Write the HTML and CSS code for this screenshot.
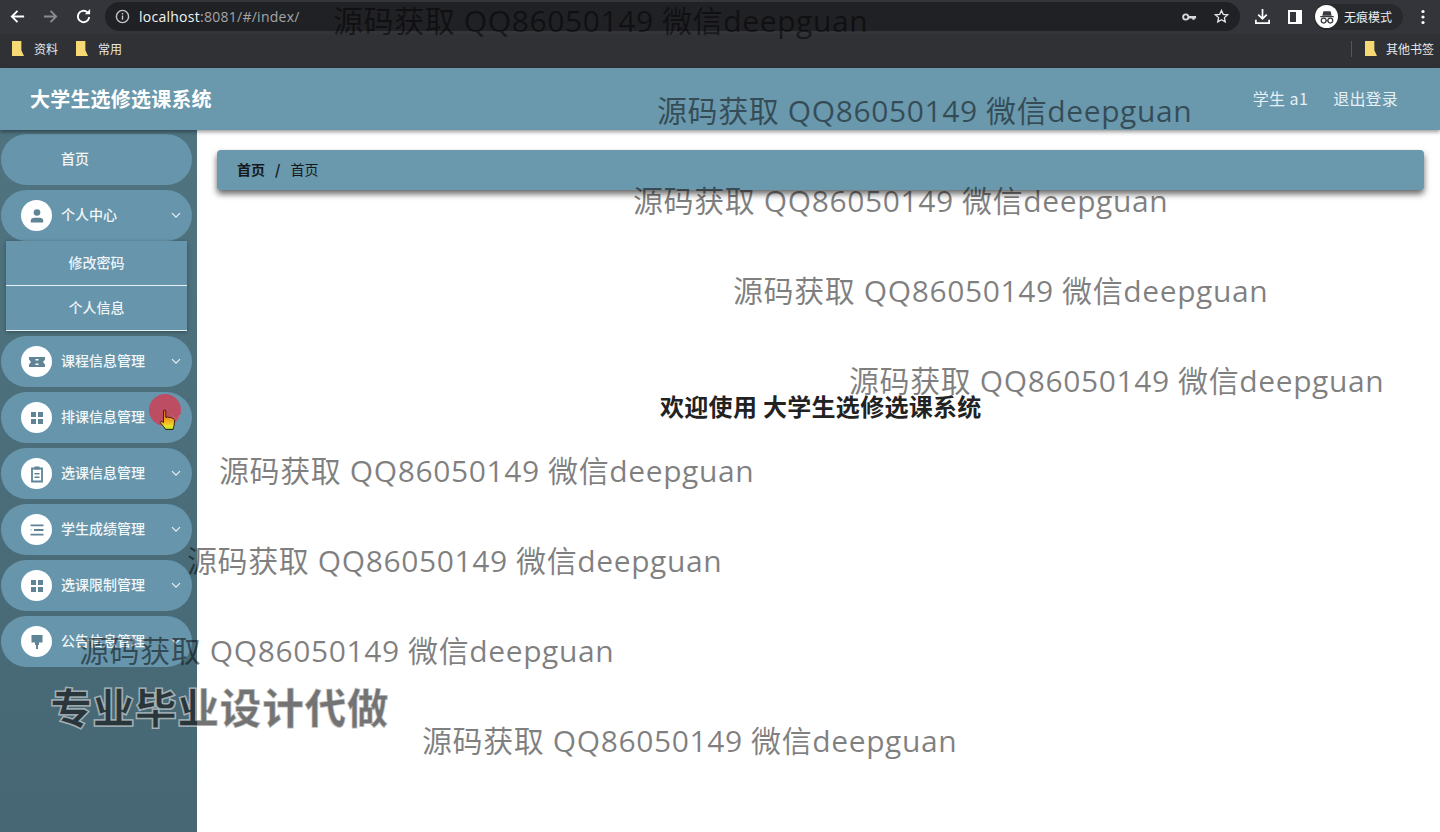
FILE: index.html
```html
<!DOCTYPE html>
<html>
<head>
<meta charset="utf-8">
<title>大学生选修选课系统</title>
<link rel="stylesheet" href="styles.css">
</head>
<body>
<div class="browser">
    <div class="toolbar">
        <svg class="tool-icon" viewBox="0 0 18 18"><path d="M16 9H3M9 3L3 9l6 6" fill="none" stroke="#fff" stroke-width="2"/></svg>
        <svg class="tool-icon forward" viewBox="0 0 18 18"><path d="M2 9h13M9 3l6 6-6 6" fill="none" stroke="#8a8b8e" stroke-width="2"/></svg>
        <svg class="tool-icon reload" viewBox="0 0 18 18"><path d="M15 9.500A6 6 0 1 1 13 4.500" fill="none" stroke="#fff" stroke-width="2"/><path d="M10.500 6.500H16V1z" fill="#fff"/></svg>
        <div class="omnibox">
            <svg class="info-icon" viewBox="0 0 16 16"><circle cx="8" cy="8" r="6.500" fill="none" stroke="#c4c6c9" stroke-width="1.500"/><path d="M8 7v4.500M8 4.300v1.500" stroke="#c4c6c9" stroke-width="1.500"/></svg>
            <span class="url-host">localhost</span><span class="url-rest">:8081/#/index/</span>
            <span class="omnibox-space"></span>
            <svg class="key-icon" viewBox="0 0 16 10"><circle cx="4" cy="5" r="2.800" fill="none" stroke="#d8d9db" stroke-width="2"/><path d="M7 4h8v2.500h-1.500v1.500H11V6.500H7z" fill="#d8d9db"/></svg>
            <svg class="star-icon" viewBox="0 0 16 16"><path d="M8 1.500l1.900 4.200 4.600.5-3.400 3 .9 4.500L8 11.400l-4 2.300.9-4.500-3.400-3 4.600-.5z" fill="none" stroke="#e3e4e6" stroke-width="1.400"/></svg>
        </div>
        <svg class="download-icon" viewBox="0 0 18 18"><path d="M9 1v10M4.500 7L9 11.500 13.500 7M2 12.500V16h14v-3.500" fill="none" stroke="#fff" stroke-width="1.800"/></svg>
        <svg class="panel-icon" viewBox="0 0 14 14"><rect x="1" y="1" width="12" height="12" fill="none" stroke="#fff" stroke-width="2"/><rect x="8" y="1" width="5" height="12" fill="#fff"/></svg>
        <div class="incognito">
            <span class="incognito-face">
                <svg viewBox="0 0 20 20"><path d="M2.500 9h15v1.200h-15zM6 3.500h8l1.200 5H4.800z" fill="#3a3b3f"/><circle cx="6.300" cy="14" r="2.700" fill="none" stroke="#3a3b3f" stroke-width="1.400"/><circle cx="13.700" cy="14" r="2.700" fill="none" stroke="#3a3b3f" stroke-width="1.400"/><path d="M9 14h2" stroke="#3a3b3f" stroke-width="1.200"/></svg>
            </span>
            <span>无痕模式</span>
        </div>
        <svg class="dots-icon" viewBox="0 0 4 16"><circle cx="2" cy="2.500" r="1.600" fill="#fff"/><circle cx="2" cy="8" r="1.600" fill="#fff"/><circle cx="2" cy="13.500" r="1.600" fill="#fff"/></svg>
    </div>
    <div class="bookmarks">
        <span class="bookmark"><i class="folder"></i>资料</span>
        <span class="bookmark"><i class="folder"></i>常用</span>
        <span class="bookmarks-space"></span>
        <span class="bookmark-sep"></span>
        <span class="bookmark last"><i class="folder"></i>其他书签</span>
    </div>
</div>

<div class="header">
    <div class="site-title">大学生选修选课系统</div>
    <div class="user-name">学生 a1</div>
    <div class="logout">退出登录</div>
</div>

<div class="main">
    <div class="sidebar">
        <div class="menu-item plain"><span class="menu-text">首页</span></div>
        <div class="menu-item">
            <span class="menu-icon"><svg viewBox="0 0 20 20"><circle cx="10" cy="6.500" r="3.300"/><path d="M3.800 16.500v-2c0-1.800 1.700-2.800 3.500-2.800h5.400c1.800 0 3.500 1 3.500 2.800v2z"/></svg></span>
            <span class="menu-text">个人中心</span>
            <svg class="chevron" viewBox="0 0 10 7"><path d="M1 1.200l4 4 4-4" fill="none" stroke="#e8f2f6" stroke-width="1.200"/></svg>
        </div>
        <div class="submenu">
            <div class="submenu-item">修改密码</div>
            <div class="submenu-item">个人信息</div>
        </div>
        <div class="menu-item">
            <span class="menu-icon"><svg viewBox="0 0 20 20"><path d="M2 5h16v2.500l-2 2.500 2 2.500V15H2v-2.500L4 10 2 7.500zM8.500 7v1.500h3V7zM8.500 11.500V13h3v-1.500z" fill-rule="evenodd"/></svg></span>
            <span class="menu-text">课程信息管理</span>
            <svg class="chevron" viewBox="0 0 10 7"><path d="M1 1.200l4 4 4-4" fill="none" stroke="#e8f2f6" stroke-width="1.200"/></svg>
        </div>
        <div class="menu-item">
            <span class="menu-icon"><svg viewBox="0 0 20 20"><path d="M4 4h5v5H4zM11 4h5v5h-5zM4 11h5v5H4zM11 11h5v5h-5z"/></svg></span>
            <span class="menu-text">排课信息管理</span>
            <svg class="chevron" viewBox="0 0 10 7"><path d="M1 1.200l4 4 4-4" fill="none" stroke="#e8f2f6" stroke-width="1.200"/></svg>
        </div>
        <div class="menu-item">
            <span class="menu-icon"><svg viewBox="0 0 20 20"><path d="M5 4.500h10v13H5z" fill="none" stroke="#5e8496" stroke-width="1.800"/><path d="M7.500 2.500h5v3h-5zM7.500 9h5v1.500h-5zM7.500 12.500h5V14h-5z"/></svg></span>
            <span class="menu-text">选课信息管理</span>
            <svg class="chevron" viewBox="0 0 10 7"><path d="M1 1.200l4 4 4-4" fill="none" stroke="#e8f2f6" stroke-width="1.200"/></svg>
        </div>
        <div class="menu-item">
            <span class="menu-icon"><svg viewBox="0 0 20 20"><path d="M3.500 4.500h13v1.800h-13zM7 9.100h9.500v1.800H7zM3.500 9.500l2 .5-2 .5zM3.500 13.700h13v1.800h-13z"/></svg></span>
            <span class="menu-text">学生成绩管理</span>
            <svg class="chevron" viewBox="0 0 10 7"><path d="M1 1.200l4 4 4-4" fill="none" stroke="#e8f2f6" stroke-width="1.200"/></svg>
        </div>
        <div class="menu-item">
            <span class="menu-icon"><svg viewBox="0 0 20 20"><path d="M4 4h5v5H4zM11 4h5v5h-5zM4 11h5v5H4zM11 11h5v5h-5z"/></svg></span>
            <span class="menu-text">选课限制管理</span>
            <svg class="chevron" viewBox="0 0 10 7"><path d="M1 1.200l4 4 4-4" fill="none" stroke="#e8f2f6" stroke-width="1.200"/></svg>
        </div>
        <div class="menu-item">
            <span class="menu-icon"><svg viewBox="0 0 20 20"><path d="M4.500 3h11v7.500h-3.500V13h-1v4H9v-4H8v-2.500H4.500z"/></svg></span>
            <span class="menu-text">公告信息管理</span>
            <svg class="chevron" viewBox="0 0 10 7"><path d="M1 1.200l4 4 4-4" fill="none" stroke="#e8f2f6" stroke-width="1.200"/></svg>
        </div>
    </div>
    <div class="content">
        <div class="breadcrumb"><b>首页</b><b class="crumb-sep">/</b><span>首页</span></div>
        <div class="welcome">欢迎使用 大学生选修选课系统</div>
    </div>
</div>

<!-- overlays burned into the recording -->
<div class="click-dot"></div>
<svg class="hand-cursor" viewBox="0 0 17 23">
    <defs><linearGradient id="hand" x1="0" y1="0" x2="0" y2="1"><stop offset="0" stop-color="#d9641f"/><stop offset=".6" stop-color="#f3b21f"/><stop offset=".85" stop-color="#e9e52a"/><stop offset="1" stop-color="#7fd02a"/></linearGradient></defs>
    <path d="M4.500 2c0-1.400 2.300-1.400 2.300 0v6.500l1.500-.5 1.500.5 1.500-.2 1.500.7 1.500.5c1 .5 1.200 1.500 1.200 2.500 0 3-.5 5-1.500 8.500H6.500c-1-2-2.800-4-5-6.500-.7-1 .5-2.200 1.500-1.500l1.500 1.200z" fill="url(#hand)" stroke="#3d2412" stroke-width="1"/>
</svg>
<div class="mark m1">源码获取 QQ86050149 微信deepguan</div>
<div class="mark m2">源码获取 QQ86050149 微信deepguan</div>
<div class="mark m3">源码获取 QQ86050149 微信deepguan</div>
<div class="mark m4">源码获取 QQ86050149 微信deepguan</div>
<div class="mark m5">源码获取 QQ86050149 微信deepguan</div>
<div class="mark m6">源码获取 QQ86050149 微信deepguan</div>
<div class="mark m7">源码获取 QQ86050149 微信deepguan</div>
<div class="mark m8">源码获取 QQ86050149 微信deepguan</div>
<div class="mark m9">源码获取 QQ86050149 微信deepguan</div>
<div class="promo">专业毕业设计代做</div>
</body>
</html>
```
FILE: styles.css
```css
html, body {
    height: 100%;
    margin: 0;
    padding: 0;
}

body {
    position: relative;
    display: flex;
    flex-direction: column;
    height: 832px;
    overflow: hidden;
    font-family: "Noto Sans CJK SC", "Open Sans", sans-serif;
    font-size: 14px;
    background: #fff;
}

/* browser chrome */
.browser {
    height: 68px;
    flex: none;
    background: #34353a;
    color: #e8e9eb;
}

.toolbar {
    display: flex;
    align-items: center;
    height: 34px;
    padding: 0 0 1px 9px;
    box-sizing: border-box;
}

.tool-icon {
    width: 17px;
    height: 17px;
    flex: none;
    margin-right: 16px;
}

.reload {
    margin-right: 13px;
}

.omnibox {
    display: flex;
    align-items: center;
    width: 1135px;
    height: 29px;
    flex: none;
    padding: 0 10px;
    box-sizing: border-box;
    background: #202124;
    border-radius: 15px;
    font-family: "Open Sans", sans-serif;
    font-size: 14px;
    letter-spacing: .26px;
}

.info-icon {
    width: 15px;
    height: 15px;
    margin-right: 9px;
}

.url-host {
    color: #f1f2f3;
}

.url-rest {
    color: #a3a5a8;
}

.omnibox-space,
.bookmarks-space {
    flex: 1;
}

.key-icon {
    width: 15px;
    height: 10px;
    margin-right: 17px;
}

.star-icon {
    width: 15px;
    height: 15px;
    margin-right: 1px;
}

.download-icon {
    width: 17px;
    height: 17px;
    flex: none;
    margin-left: 14px;
}

.panel-icon {
    width: 14px;
    height: 14px;
    flex: none;
    margin-left: 17px;
}

.incognito {
    display: flex;
    align-items: center;
    width: 89px;
    height: 26px;
    flex: none;
    box-sizing: border-box;
    margin-left: 12px;
    background: #28292c;
    border-radius: 13px;
    font-size: 12px;
    color: #eceded;
}

.incognito-face {
    display: flex;
    align-items: center;
    justify-content: center;
    width: 23px;
    height: 23px;
    margin: 0 6px 0 1px;
    background: #fff;
    border-radius: 50%;
}

.incognito-face svg {
    width: 18px;
    height: 18px;
}

.dots-icon {
    width: 4px;
    height: 16px;
    flex: none;
    margin-left: 18px;
}

.bookmarks {
    display: flex;
    align-items: center;
    height: 34px;
    padding: 0 6px 5px 12px;
    box-sizing: border-box;
    font-size: 12px;
    background: #303135;
}

.bookmark {
    display: flex;
    align-items: center;
    margin-right: 18px;
}

.bookmark.last {
    margin-right: 0;
}

.folder {
    display: block;
    width: 12px;
    height: 15px;
    margin-right: 10px;
    background: #f6d874;
    clip-path: polygon(0 0, 78% 0, 78% 62%, 100% 100%, 0 100%);
}

.last .folder {
    margin-right: 9px;
}

.bookmark-sep {
    width: 1px;
    height: 16px;
    margin-right: 13px;
    background: #55565a;
}

/* app header */
.header {
    display: flex;
    align-items: center;
    height: 62px;
    flex: none;
    padding: 0 42px 2px 30px;
    box-sizing: border-box;
    background: #6a98ad;
    color: #e6f0f4;
    box-shadow: 0 2px 4px rgba(0, 0, 0, .4);
    position: relative;
    z-index: 2;
}

.site-title {
    flex: 1;
    font-size: 20px;
    font-weight: bold;
    letter-spacing: .2px;
    color: #fff;
}

.user-name {
    font-size: 16px;
    letter-spacing: .4px;
    margin-right: 25px;
}

.logout {
    font-size: 16px;
    letter-spacing: .2px;
}

.main {
    display: flex;
    flex: 1;
    min-height: 0;
}

/* left menu */
.sidebar {
    display: flex;
    flex-direction: column;
    gap: 5px;
    width: 197px;
    flex: none;
    padding: 4px 5px 0 1px;
    box-sizing: border-box;
    background: linear-gradient(180deg, #4f7480, #466773);
}

.menu-item {
    display: flex;
    align-items: center;
    height: 51px;
    flex: none;
    padding-left: 20px;
    box-sizing: border-box;
    background: #6795ab;
    border-radius: 26px;
    color: #f2f7f9;
}

.menu-item.plain {
    padding-left: 60px;
}

.menu-icon {
    display: flex;
    align-items: center;
    justify-content: center;
    width: 31px;
    height: 31px;
    flex: none;
    margin-right: 9px;
    background: #fff;
    border-radius: 50%;
}

.menu-icon svg {
    width: 20px;
    height: 20px;
    fill: #5e8496;
}

.menu-text {
    flex: 1;
    padding-bottom: 3px;
    font-weight: 500;
}

.chevron {
    width: 10px;
    height: 7px;
    flex: none;
    margin-right: 11px;
}

.submenu {
    margin: -5px 5px 0 5px;
    background: #6795ab;
    color: #edf3f6;
    box-shadow: 0 1px 4px rgba(0, 0, 0, .3);
    font-weight: 500;
}

.submenu-item {
    height: 45px;
    line-height: 42px;
    box-sizing: border-box;
    border-bottom: 1px solid #e6f0f5;
    text-align: center;
}

/* content */
.content {
    display: flex;
    flex-direction: column;
    flex: 1;
    padding: 20px 16px 0 20px;
}

.breadcrumb {
    display: flex;
    align-items: center;
    height: 40px;
    padding: 0 0 2px 20px;
    box-sizing: border-box;
    background: #6a98ad;
    border-radius: 4px;
    color: #14181c;
    box-shadow: 0 4px 6px rgba(0, 0, 0, .6);
}

.crumb-sep {
    margin: 0 10px;
}

.welcome {
    margin-top: 198px;
    padding-left: 443px;
    font-size: 24px;
    font-weight: bold;
    letter-spacing: .3px;
    color: #222;
}

/* video overlays */
.click-dot {
    position: absolute;
    left: 149px;
    top: 394px;
    width: 32px;
    height: 32px;
    background: rgba(205, 65, 85, .85);
    border-radius: 50%;
    z-index: 5;
}

.hand-cursor {
    position: absolute;
    left: 159px;
    top: 409px;
    width: 17px;
    height: 23px;
    z-index: 6;
}

.mark {
    position: absolute;
    z-index: 7;
    font-family: "Open Sans", "Noto Sans CJK SC", sans-serif;
    font-size: 30px;
    line-height: 40px;
    letter-spacing: .6px;
    white-space: nowrap;
    color: rgba(0, 0, 0, .5);
}

.m1 { left: 333px; top: 1px; }
.m2 { left: 657px; top: 91px; }
.m3 { left: 633px; top: 181px; }
.m4 { left: 733px; top: 271px; }
.m5 { left: 849px; top: 361px; }
.m6 { left: 219px; top: 451px; }
.m7 { left: 187px; top: 541px; }
.m8 { left: 79px; top: 631px; }
.m9 { left: 422px; top: 721px; }

.promo {
    position: absolute;
    left: 50px;
    top: 676px;
    z-index: 8;
    font-size: 42px;
    line-height: 60px;
    font-weight: 900;
    letter-spacing: .4px;
    white-space: nowrap;
    color: rgba(20, 20, 20, .6);
    -webkit-text-stroke: 1.5px rgba(255, 255, 255, .55);
}
```
